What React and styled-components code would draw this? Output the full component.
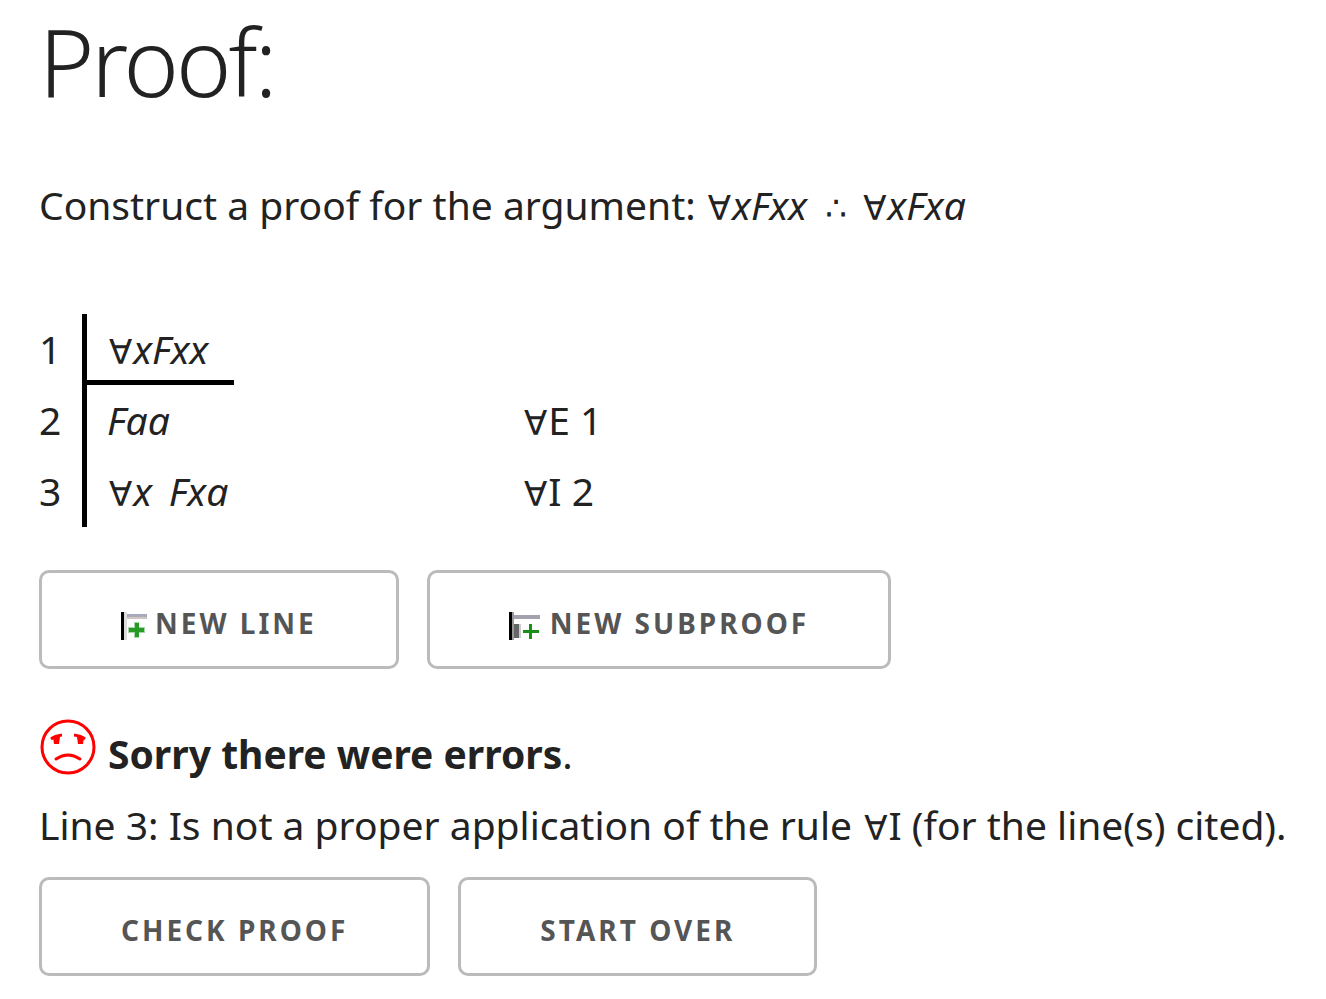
import React from "react";
import styled, { createGlobalStyle } from "styled-components";

const GlobalStyle = createGlobalStyle`
  body {
    margin: 0;
    background: #fff;
    color: #222;
    font-family: "Noto Sans", sans-serif;
    font-size: 39px;
    line-height: 64px;
  }
`;

const Page = styled.main`
  padding: 0 24px 23px 39px;
`;

const Title = styled.h1`
  margin: 0;
  padding-top: 3px;
  font-size: 94px;
  font-weight: 300;
  line-height: 116px;
  letter-spacing: -3px;
`;

const Prompt = styled.p`
  margin: 54px 0 77px;
`;

const Formula = styled.em`
  font-style: italic;
  white-space: pre;
`;

const Sign = styled.span`
  padding: ${(p) => (p.$spaced ? "0 4px 0 8px" : "0 1px 0 2px")};
  font-family: "DejaVu Sans", sans-serif;
  font-size: 34px;
  font-weight: 400;
  font-style: normal;
  line-height: 1;
`;

const ProofTable = styled.table`
  border-collapse: collapse;
  margin-bottom: 43px;
  line-height: 69px;
`;

const LineNumber = styled.th`
  width: 43px;
  padding: 0;
  font-weight: 400;
  text-align: left;
  vertical-align: top;
`;

const Step = styled.td`
  width: 435px;
  height: 71px;
  padding: 0;
  border-left: 5px solid #000;
  vertical-align: top;
`;

const StepText = styled.div`
  box-sizing: border-box;
  width: fit-content;
  height: 71px;
  padding: 0 26px 0 20px;
  border-bottom: ${(p) => (p.$premise ? "5px solid #000" : "none")};
`;

const Rule = styled.td`
  padding: 0;
  vertical-align: top;
`;

const Actions = styled.div`
  display: flex;
  flex-wrap: wrap;
  gap: 28px;
`;

const Button = styled.button`
  display: flex;
  align-items: center;
  gap: 7px;
  height: 99px;
  padding: 7px 79px 0;
  border: 3px solid #bbb;
  border-radius: 10px;
  background: transparent;
  color: #555;
  font: 700 28px/40px "Noto Sans", sans-serif;
  letter-spacing: 3px;
  text-transform: uppercase;
  white-space: nowrap;
`;

const Results = styled.section`
  margin: 49px 0 17px;
  line-height: 71px;
`;

const Verdict = styled.p`
  display: flex;
  gap: 11px;
  margin: 0;
`;

const Detail = styled.p`
  margin: 0;
`;

const Face = styled.svg`
  width: 58px;
  height: 58px;
  flex: none;
`;

const All = () => <Sign>∀</Sign>;

const LineIcon = () => (
  <svg width="27" height="34" viewBox="0 -6 27 34" aria-hidden="true">
    <path d="M3 0h3v28H3z" fill="#ddd" />
    <path d="M0 0h3v28H0z" fill="#000" />
    <path d="M6 2h20v3H6z" fill="#aaaabd" />
    <path d="M6 5h20v2H6z" fill="#d0c8c0" />
    <path d="M7 15h17v6H7zM13 10h5v16h-5z" fill="#a5d6a5" />
    <path d="M8 16h15v4H8zM14 11h4v14h-4z" fill="#259a25" />
  </svg>
);

const SubproofIcon = () => (
  <svg width="34" height="34" viewBox="0 -6 34 34" aria-hidden="true">
    <path d="M3 0h2v28H3z" fill="#999" />
    <path d="M0 0h3v28H0z" fill="#000" />
    <path d="M5 3h26v4H5z" fill="#a5a2ae" />
    <path d="M5 12h5v14H5z" fill="#666" />
    <path d="M10 12h2v14h-2z" fill="#ccc" />
    <path d="M14 18h16v3H14zM20 12h3v15h-3z" fill="#189018" />
  </svg>
);

const SadFace = () => (
  <Face viewBox="0 0 58 58" role="img" aria-label="Sad face" fill="none" stroke="#f00">
    <circle cx="29" cy="29" r="26" strokeWidth="3" />
    <path d="M17 41q12-8 24 0" strokeWidth="3" strokeLinecap="round" />
    <path d="M12 21q4-3 11-4M35 17q7 1 11 4" strokeWidth="3" />
    <path d="M14 19h7l-1 7h-5zM38 19h7l-1 7h-5z" fill="#f00" stroke="none" />
  </Face>
);

const steps = [
  { formula: <><All />xFxx</>, rule: null, premise: true },
  { formula: "Faa", rule: <><All />E 1</> },
  { formula: <><All />x{" \u2006"}Fxa</>, rule: <><All />I 2</> },
];

export default function App() {
  return (
    <>
      <GlobalStyle />
      <Page>
        <Title>Proof:</Title>
        <Prompt>
          Construct a proof for the argument:{" "}
          <Formula><All />xFxx <Sign $spaced>∴</Sign> <All />xFxa</Formula>
        </Prompt>
        <ProofTable>
          <tbody>
            {steps.map((step, i) => (
              <tr key={i}>
                <LineNumber scope="row">{i + 1}</LineNumber>
                <Step>
                  <StepText $premise={step.premise}>
                    <Formula>{step.formula}</Formula>
                  </StepText>
                </Step>
                <Rule>{step.rule}</Rule>
              </tr>
            ))}
          </tbody>
        </ProofTable>
        <Actions>
          <Button type="button"><LineIcon />new line</Button>
          <Button type="button"><SubproofIcon />new subproof</Button>
        </Actions>
        <Results>
          <Verdict>
            <SadFace />
            <span><strong>Sorry there were errors</strong>.</span>
          </Verdict>
          <Detail>
            Line 3: Is not a proper application of the rule <All />I (for the line(s) cited).
          </Detail>
        </Results>
        <Actions>
          <Button type="button">check proof</Button>
          <Button type="button">start over</Button>
        </Actions>
      </Page>
    </>
  );
}
